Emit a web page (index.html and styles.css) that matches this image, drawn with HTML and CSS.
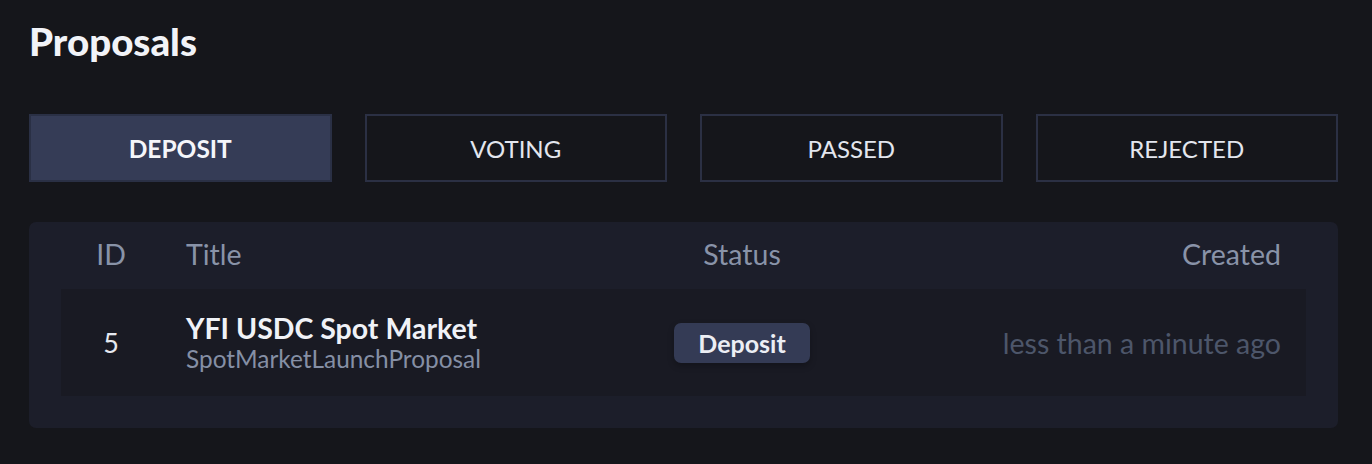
FILE: index.html
```html
<!DOCTYPE html>
<html>
<head>
<meta charset="utf-8">
<link rel="stylesheet" href="styles.css">
</head>
<body>
<div class="page">
  <h1 class="title">Proposals</h1>
  <div class="tabs">
    <div class="tab active">DEPOSIT</div>
    <div class="tab">VOTING</div>
    <div class="tab">PASSED</div>
    <div class="tab">REJECTED</div>
  </div>
  <div class="card">
    <div class="grid head">
      <div class="c-id">ID</div>
      <div class="c-title">Title</div>
      <div class="c-status">Status</div>
      <div class="c-created">Created</div>
    </div>
    <div class="grid row">
      <div class="c-id num">5</div>
      <div class="c-title">
        <div class="name">YFI USDC Spot Market</div>
        <div class="type">SpotMarketLaunchProposal</div>
      </div>
      <div class="c-status"><span class="badge">Deposit</span></div>
      <div class="c-created time">less than a minute ago</div>
    </div>
  </div>
</div>
</body>
</html>
```

FILE: styles.css
```css
html, body {
  margin: 0;
  padding: 0;
  background: #15161b;
}
body {
  font-family: Lato, "Noto Sans", sans-serif;
  color: #eef0f5;
}
.page {
  padding: 19px 34px 0 29px;
}
.title {
  margin: 0;
  font-size: 38.5px;
  font-weight: 900;
  line-height: 44px;
  color: #f1f3f8;
}
.tabs {
  margin-top: 51px;
  display: grid;
  grid-template-columns: repeat(4, 1fr);
  gap: 33px;
}
.tab {
  height: 68px;
  box-sizing: border-box;
  border: 2px solid #2b3044;
  display: flex;
  align-items: center;
  justify-content: center;
  font-size: 24px;
  color: #e3e6ee;
}
.tab.active {
  background: #353c56;
  border-color: #2a3045;
  font-weight: 700;
  font-size: 24.5px;
  color: #f5f6fa;
}
.card {
  margin-top: 40px;
  background: #1c1e2a;
  border-radius: 7px;
  padding: 0 32px 32px;
}
.grid {
  display: grid;
  grid-template-columns: 100px 481px 200px 1fr;
  align-items: center;
}
.head {
  height: 67px;
  box-sizing: border-box;
  padding-bottom: 4px;
  font-size: 28.5px;
  color: #8993a8;
}
.row {
  height: 107px;
  background: #191a23;
}
.c-id { text-align: center; }
.c-title { padding-left: 25px; }
.c-status { text-align: center; }
.c-created { text-align: right; padding-right: 25px; }
.num {
  font-size: 27px;
  color: #e6e9f0;
}
.name {
  font-size: 28.5px;
  font-weight: 700;
  line-height: 31px;
  color: #f0f2f7;
}
.type {
  font-size: 24.4px;
  line-height: 29px;
  color: #858fa5;
}
.badge {
  display: inline-block;
  background: #343b55;
  border-radius: 7px;
  padding: 0 24px;
  height: 40px;
  line-height: 40px;
  font-size: 25px;
  font-weight: 700;
  color: #eceef4;
  box-shadow: 0 3px 6px rgba(0,0,0,0.25);
}
.time {
  font-size: 28.5px;
  color: #4d566a;
}
```
